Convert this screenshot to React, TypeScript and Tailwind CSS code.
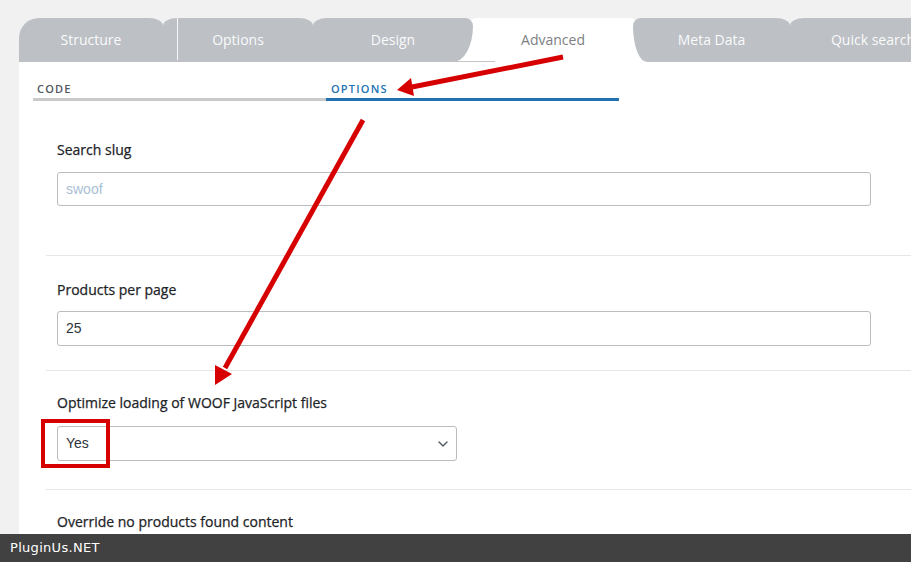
import { ChevronDown } from "lucide-react";

const tabText = "text-[14px] text-white/95";
const label = "text-[14px] leading-[20px] text-[#1d2327] [-webkit-text-stroke:0.25px_#1d2327]";

export default function App() {
  return (
    <div className="relative flex h-[562px] w-[911px] flex-col overflow-hidden bg-[#f1f1f1] font-['Open_Sans',sans-serif]">
      {/* Main area */}
      <div className="flex min-h-0 flex-1 flex-col pl-[19px] pt-[18px]">
        {/* Tab strip */}
        <div className="relative flex h-[44px] shrink-0">
          <div className="flex w-[144px] shrink-0 items-center justify-center rounded-tl-[20px] rounded-tr-[14px_8px] bg-[#bdc1c6] pb-[2px]">
            <span className={tabText}>Structure</span>
          </div>
          <div className="relative flex w-[150px] shrink-0 items-center justify-center rounded-t-[14px_8px] bg-[#bdc1c6] pb-[2px]">
            <div className="absolute left-[14px] top-0 h-[42px] w-px bg-white/90" />
            <span className={tabText}>Options</span>
          </div>
          <div className="relative z-10 flex w-[160px] shrink-0 items-center justify-center rounded-tl-[14px_8px] rounded-tr-[8px] rounded-br-[20px_36px] bg-[#bdc1c6] pb-[2px]">
            <span className={tabText}>Design</span>
          </div>
          <div className="-mx-[20px] flex w-[200px] shrink-0 items-center justify-center rounded-t-[26px_30px] bg-white pb-[2px]">
            <span className="text-[14px] text-[#7d7f82]">Advanced</span>
          </div>
          <div className="relative z-10 flex w-[157px] shrink-0 items-center justify-center rounded-tl-[8px] rounded-bl-[14px_36px] rounded-tr-[14px_8px] bg-[#bdc1c6] pb-[2px]">
            <span className={tabText}>Meta Data</span>
          </div>
          <div className="flex w-[166px] shrink-0 items-center justify-center rounded-tl-[14px_8px] bg-[#bdc1c6] pb-[2px]">
            <span className={tabText}>Quick search</span>
          </div>
          <div className="absolute left-[434px] top-[43px] z-20 h-px w-[42px] bg-[#c4c4c4]" />
        </div>

        {/* Panel */}
        <div className="flex min-h-0 flex-1 flex-col bg-white pt-[19px]">
          {/* Sub tabs */}
          <div className="flex pl-[14px]">
            <div className="w-[293px] border-b-[3px] border-[#c9cacc] pb-[1px] pl-[4px] text-[11px] font-semibold leading-[16px] tracking-[1.2px] text-[#50575e]">
              CODE
            </div>
            <div className="w-[293px] border-b-[3px] border-[#2271b1] pb-[1px] pl-[5px] text-[11px] font-semibold leading-[16px] tracking-[1.2px] text-[#2271b1]">
              OPTIONS
            </div>
          </div>

          {/* Sections */}
          <div className="ml-[27px] flex flex-col">
            <div className="border-b border-[#e6e7e8] pb-[49px] pl-[11px] pr-[40px] pt-[39px]">
              <div className={label}>Search slug</div>
              <div className="mt-[12px] flex h-[34px] items-center rounded-[3px] border border-[#bcbcbc] px-[8px] font-['Liberation_Sans',Arial,sans-serif] text-[14px] text-[#a9c0d6]">
                swoof
              </div>
            </div>

            <div className="border-b border-[#e6e7e8] pb-[24px] pl-[11px] pr-[40px] pt-[24px]">
              <div className={label}>Products per page</div>
              <div className="mt-[11px] flex h-[35px] items-center rounded-[3px] border border-[#bcbcbc] px-[8px] font-['Liberation_Sans',Arial,sans-serif] text-[14px] text-[#2c3338]">
                25
              </div>
            </div>

            <div className="border-b border-[#e6e7e8] pb-[28px] pl-[11px] pr-[40px] pt-[22px]">
              <div className={label}>Optimize loading of WOOF JavaScript files</div>
              <div className="mt-[13px] flex h-[35px] w-[400px] items-center justify-between rounded-[3px] border border-[#bcbcbc] pl-[8px] pr-[5px] font-['Liberation_Sans',Arial,sans-serif] text-[14px] text-[#2c3338]">
                <span>Yes</span>
                <ChevronDown size={16} strokeWidth={2} className="text-[#50575e]" />
              </div>
            </div>

            <div className="pl-[11px] pr-[40px] pt-[22px]">
              <div className={label}>Override no products found content</div>
            </div>
          </div>
        </div>
      </div>

      {/* Footer */}
      <div className="flex h-[28px] shrink-0 items-center bg-[#414141] pl-[10px] font-['DejaVu_Sans',sans-serif] text-[13px] tracking-[0.3px] text-white">
        PluginUs.NET
      </div>

      {/* Annotations */}
      <div className="absolute left-[41px] top-[419px] h-[49px] w-[69px] border-4 border-[#d60000]" />
      <svg className="pointer-events-none absolute inset-0" width={911} height={562}>
        <line x1={563} y1={57} x2={412} y2={87} stroke="#d60000" strokeWidth={5} />
        <polygon points="397,90 411,78 414,96" fill="#d60000" />
        <line x1={363} y1={120} x2={225} y2={368} stroke="#d60000" strokeWidth={5} />
        <polygon points="215,385 215,365 232,374" fill="#d60000" />
      </svg>
    </div>
  );
}
